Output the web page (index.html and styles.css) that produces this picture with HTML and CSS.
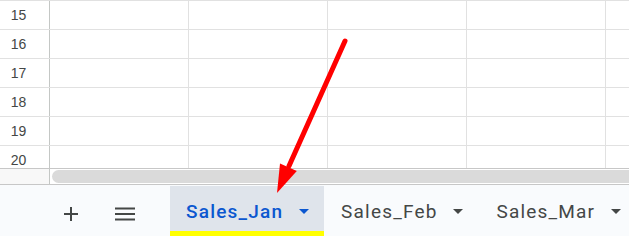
FILE: index.html
```html
<!DOCTYPE html>
<html lang="en">
<head>
    <meta charset="UTF-8">
    <meta name="viewport" content="width=device-width, initial-scale=1.0">
    <title>Sheet tabs</title>
    <link rel="stylesheet" href="styles.css">
</head>
<body>
    <div class="sheet">
        <div class="row"><div class="row-head">15</div><div class="cell"></div><div class="cell"></div><div class="cell"></div><div class="cell"></div><div class="cell"></div></div>
        <div class="row"><div class="row-head">16</div><div class="cell"></div><div class="cell"></div><div class="cell"></div><div class="cell"></div><div class="cell"></div></div>
        <div class="row"><div class="row-head">17</div><div class="cell"></div><div class="cell"></div><div class="cell"></div><div class="cell"></div><div class="cell"></div></div>
        <div class="row"><div class="row-head">18</div><div class="cell"></div><div class="cell"></div><div class="cell"></div><div class="cell"></div><div class="cell"></div></div>
        <div class="row"><div class="row-head">19</div><div class="cell"></div><div class="cell"></div><div class="cell"></div><div class="cell"></div><div class="cell"></div></div>
        <div class="row"><div class="row-head">20</div><div class="cell"></div><div class="cell"></div><div class="cell"></div><div class="cell"></div><div class="cell"></div></div>
    </div>
    <div class="scroll">
        <div class="scroll-corner"></div>
        <div class="scroll-track"><div class="scroll-thumb"></div></div>
    </div>
    <div class="tabbar">
        <button class="icon-btn" aria-label="Add sheet">
            <svg width="16" height="16" viewBox="0 0 16 16"><path d="M8 1v14M1 8h14" stroke="#444746" stroke-width="2" fill="none"/></svg>
        </button>
        <button class="icon-btn" aria-label="All sheets">
            <svg width="20" height="14" viewBox="0 0 20 14"><path d="M0 1.5h20M0 7h20M0 12.5h20" stroke="#444746" stroke-width="2" fill="none"/></svg>
        </button>
        <div class="tab active"><span class="name">Sales_Jan</span><span class="caret"></span></div>
        <div class="tab"><span class="name">Sales_Feb</span><span class="caret"></span></div>
        <div class="tab"><span class="name">Sales_Mar</span><span class="caret"></span></div>
    </div>
    <svg class="arrow" width="629" height="236" viewBox="0 0 629 236">
        <line x1="345" y1="41" x2="289" y2="166" stroke="#ff0000" stroke-width="5" stroke-linecap="round"/>
        <polygon points="277,193 280,163.5 296.8,171" fill="#ff0000"/>
    </svg>
</body>
</html>
```

FILE: styles.css
```css
body { margin: 0; width: 629px; height: 236px; overflow: hidden; background: #fff; font-family: Roboto, "Liberation Sans", Arial, sans-serif; position: relative; }

.sheet { height: 168px; overflow: hidden; border-top: 1px solid #e1e1e1; box-sizing: border-box; }
.row { display: flex; height: 29px; border-bottom: 1px solid #e1e1e1; box-sizing: border-box; }
.row-head { flex: none; width: 50px; border-right: 1px solid #c4c7c5; padding-right: 12px; box-sizing: border-box; text-align: center; font-family: "Liberation Sans", Arial, sans-serif; font-size: 14px; color: #444746; line-height: 28px; }
.cell { width: 139px; flex: none; border-right: 1px solid #e1e1e1; box-sizing: border-box; }

.scroll { display: flex; height: 17px; border-top: 1px solid #c7c7c7; border-bottom: 1px solid #c7c7c7; box-sizing: border-box; }
.scroll-corner { width: 50px; background: #f8f8f8; border-right: 1px solid #c4c7c5; box-sizing: border-box; }
.scroll-track { flex: 1; padding: 1px 0 1px 2px; }
.scroll-thumb { height: 13px; background: #dadada; border-radius: 7px 0 0 7px; }

.tabbar { display: flex; align-items: stretch; height: 51px; background: #f9fbfd; padding-left: 51px; box-sizing: border-box; padding-top: 1px; }
.icon-btn { flex: none; width: 40px; border: 0; background: none; padding: 0; display: flex; align-items: center; justify-content: center; margin-right: 14px; padding-top: 5px; }
.icon-btn + .icon-btn { margin-right: 25px; }

.tab { flex: none; display: flex; align-items: center; padding: 5px 15px 0 16px; margin-right: 2px; font-size: 19px; letter-spacing: 1.2px; color: #444746; white-space: nowrap; border-bottom: 5px solid transparent; }
.tab.active { background: #dfe4eb; color: #0b57d0; font-weight: 500; border-bottom-color: #ffff00; margin-right: 1px; }
.name { margin-right: -1.2px; }
.caret { width: 0; height: 0; border-left: 5px solid transparent; border-right: 5px solid transparent; border-top: 5px solid currentColor; margin-left: 17px; }

.arrow { position: absolute; left: 0; top: 0; pointer-events: none; }
```
